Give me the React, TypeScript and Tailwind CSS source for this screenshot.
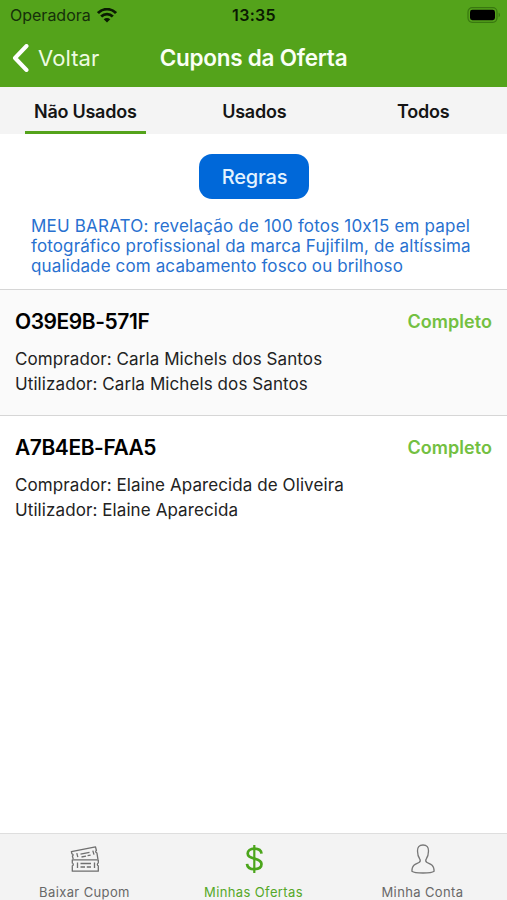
import clsx from "clsx";

interface Coupon {
  code: string;
  status: string;
  buyer: string;
  user: string;
}

const coupons: Coupon[] = [
  {
    code: "O39E9B-571F",
    status: "Completo",
    buyer: "Carla Michels dos Santos",
    user: "Carla Michels dos Santos",
  },
  {
    code: "A7B4EB-FAA5",
    status: "Completo",
    buyer: "Elaine Aparecida de Oliveira",
    user: "Elaine Aparecida",
  },
];

const filters = ["Não Usados", "Usados", "Todos"];

function WifiIcon() {
  return (
    <svg width="20" height="15" viewBox="0 0 20 15" fill="none">
      <g stroke="#0a1a02" strokeWidth="2.8">
        <path d="M1 5.1C6-.1 14-.1 19 5.1" />
        <path d="M4.2 8.6c3.3-3.3 8.3-3.3 11.6 0" />
      </g>
      <path d="M10 14.500 6.700 11.300c1.900-1.800 4.700-1.800 6.600 0z" fill="#0a1a02" />
    </svg>
  );
}

function BatteryIcon() {
  return (
    <svg width="34" height="16" viewBox="0 0 34 16">
      <rect
        x="1"
        y=".7"
        width="29"
        height="14.6"
        rx="4.2"
        fill="none"
        stroke="#397810"
        strokeWidth="1.2"
      />
      <rect x="3" y="2.8" width="25" height="10.4" rx="2.4" fill="#000" />
      <path d="M31.6 5.8c1.8.6 1.8 3.8 0 4.4z" fill="#397810" />
    </svg>
  );
}

function TicketsIcon() {
  return (
    <svg
      width="30"
      height="28"
      viewBox="0 0 30 28"
      fill="none"
      stroke="#6f6f6f"
      strokeWidth="1.3"
      strokeLinejoin="round"
    >
      <path d="M2.300 14.800h26v3.200c-1.300.4-1.300 2.400 0 2.800v5.400h-26v-5.400c1.300-.4 1.300-2.400 0-2.800z" />
      <path d="M3.200 14.200 2.400 11c1.200-.6.800-2.100-.5-2.200l-.5-2.100L25.500 1.900l.9 3.600c-1.200.6-.8 2.200.5 2.400l1 6.300" />
      <path d="M7.500 17.500v5.500M6.800 8.200l1 4M24.500 17.500v5.500M22.800 5.600l1.200 4" />
      <path d="m10.500 9.200 9-1.800M11.500 12l4.500-.9m1.600-.4 3-.6M10.500 18.500h10.500m-10.500 3.500h4.500m1.800 0h4.200" />
    </svg>
  );
}

function DollarIcon() {
  return (
    <svg
      width="20"
      height="30"
      viewBox="0 0 20 30"
      fill="none"
      stroke="#4ba51b"
    >
      <path d="M10.300 1v28" strokeWidth="2.200" />
      <path
        d="M17.500 9.600C17.200 6.400 14.400 4.700 10.300 4.700c-4 0-6.600 1.800-6.600 4.800 0 3.100 2.500 4.100 6.700 5.100 4.600 1.100 7.100 2.300 7.100 5.500s-2.700 5.100-7.100 5.100c-4.400 0-7.100-1.900-7.400-5.400"
        strokeWidth="2.700"
      />
    </svg>
  );
}

function PersonIcon() {
  return (
    <svg
      width="24"
      height="30"
      viewBox="0 0 24 30"
      fill="none"
      stroke="#777"
      strokeWidth="1.3"
      strokeLinejoin="round"
    >
      <path d="M12 1C8.100 1 6.300 3.400 6.500 7c.1 3.400.6 5.600 2 7.500.9 1.300.8 3-.2 3.800-1.300 1-3.700 1.400-5.400 2.900C1.200 22.700.9 25 .9 27.300c1.300 1 5.600 1.700 11.100 1.700s9.800-.7 11.100-1.700c0-2.300-.3-4.600-2-6.100-1.700-1.500-4.100-1.900-5.400-2.900-1-.8-1.100-2.500-.2-3.800 1.400-1.900 1.900-4.100 2-7.500C17.700 3.400 15.900 1 12 1z" />
    </svg>
  );
}

const navItems = [
  { label: "Baixar Cupom", icon: TicketsIcon, active: false },
  { label: "Minhas Ofertas", icon: DollarIcon, active: true },
  { label: "Minha Conta", icon: PersonIcon, active: false },
];

function Header() {
  return (
    <header className="h-[87px] bg-[#54a31b]">
      <div className="grid h-[29px] grid-cols-3 items-center">
        <div className="flex items-center gap-1.5 pl-[10px] text-[16px] leading-[30px] text-[#16300a]">
          <span>Operadora</span>
          <WifiIcon />
        </div>
        <span className="pl-px text-center text-[16px] leading-[30px] font-semibold tracking-[0.3px] text-[#0a1a02]">
          13:35
        </span>
        <div className="flex justify-end pr-[6px]">
          <BatteryIcon />
        </div>
      </div>
      <div className="grid h-[58px] grid-cols-[130px_1fr_130px] items-center">
        <button className="flex items-center gap-[9px] pl-[12px] text-[22px] text-[#eefbe2]">
          <svg width="17" height="28" viewBox="0 0 17 28" fill="none">
            <path
              d="M14.500 2 3 14l11.500 12"
              stroke="#fff"
              strokeWidth="4"
              strokeLinecap="round"
              strokeLinejoin="round"
            />
          </svg>
          <span className="tracking-[0.1px]">Voltar</span>
        </button>
        <h1 className="text-center text-[22.500px] font-semibold tracking-[-0.25px] whitespace-nowrap text-[#fafff5]">
          Cupons da Oferta
        </h1>
      </div>
    </header>
  );
}

function CouponRow({ coupon, shaded }: { coupon: Coupon; shaded: boolean }) {
  return (
    <li
      className={clsx(
        "h-[126px] border-t border-[#d6d6d6] px-[15px] pt-[17px]",
        shaded ? "bg-[#fafafa]" : "bg-white"
      )}
    >
      <div className="flex h-[29px] items-center justify-between">
        <span className="text-[21px] font-semibold tracking-[-0.45px] text-black">
          {coupon.code}
        </span>
        <span className="text-[18px] font-semibold tracking-[0.05px] text-[#73c041]">
          {coupon.status}
        </span>
      </div>
      <div className="pt-[10.500px] text-[17px] leading-[25.500px] tracking-[0.09px] text-[#222]">
        <p>Comprador: {coupon.buyer}</p>
        <p>Utilizador: {coupon.user}</p>
      </div>
    </li>
  );
}

export default function App() {
  return (
    <div className="flex h-[900px] w-[507px] flex-col overflow-hidden bg-white font-['Inter',sans-serif]">
      <Header />
      <nav className="grid h-[47px] grid-cols-3 bg-[#f4f4f4]">
        {filters.map((filter, i) => (
          <button
            key={filter}
            className={clsx(
              "mr-[23px] ml-[24.500px] border-b-[3px] pt-1 text-[18px] font-semibold tracking-[-0.25px] text-[#151515]",
              i === 0 ? "border-[#54a31b]" : "border-transparent"
            )}
          >
            {filter}
          </button>
        ))}
      </nav>
      <section className="flex h-[155px] flex-col items-center pt-5">
        <button className="h-[45px] w-[110px] rounded-[13px] bg-[#0068d9] pl-0.5 text-[20px] font-medium tracking-[-0.2px] text-[#e3f3ff]">
          Regras
        </button>
        <p className="w-full pt-[16.500px] pl-[31px] text-[17px] leading-[20.300px] tracking-[0.13px] whitespace-nowrap text-[#2871d0] [font-feature-settings:'calt'_0]">
          <span className="tracking-[0.19px]">
            MEU BARATO: revelação de 100 fotos 10x15 em papel
          </span>
          <br />
          fotográfico profissional da marca Fujifilm, de altíssima
          <br />
          qualidade com acabamento fosco ou brilhoso
        </p>
      </section>
      <ul>
        {coupons.map((coupon, i) => (
          <CouponRow key={coupon.code} coupon={coupon} shaded={i % 2 === 0} />
        ))}
      </ul>
      <footer className="mt-auto grid h-[67px] grid-cols-3 border-t border-[#dedede] bg-[#f3f3f3]">
        {navItems.map(({ label, icon: Icon, active }) => (
          <button
            key={label}
            className={clsx(
              "flex flex-col items-center text-[13px]",
              active ? "text-[#55a829]" : "text-[#686868]"
            )}
          >
            <span className="flex h-[50px] items-center">
              <Icon />
            </span>
            <span className="leading-[17px] tracking-[0.38px]">{label}</span>
          </button>
        ))}
      </footer>
    </div>
  );
}
